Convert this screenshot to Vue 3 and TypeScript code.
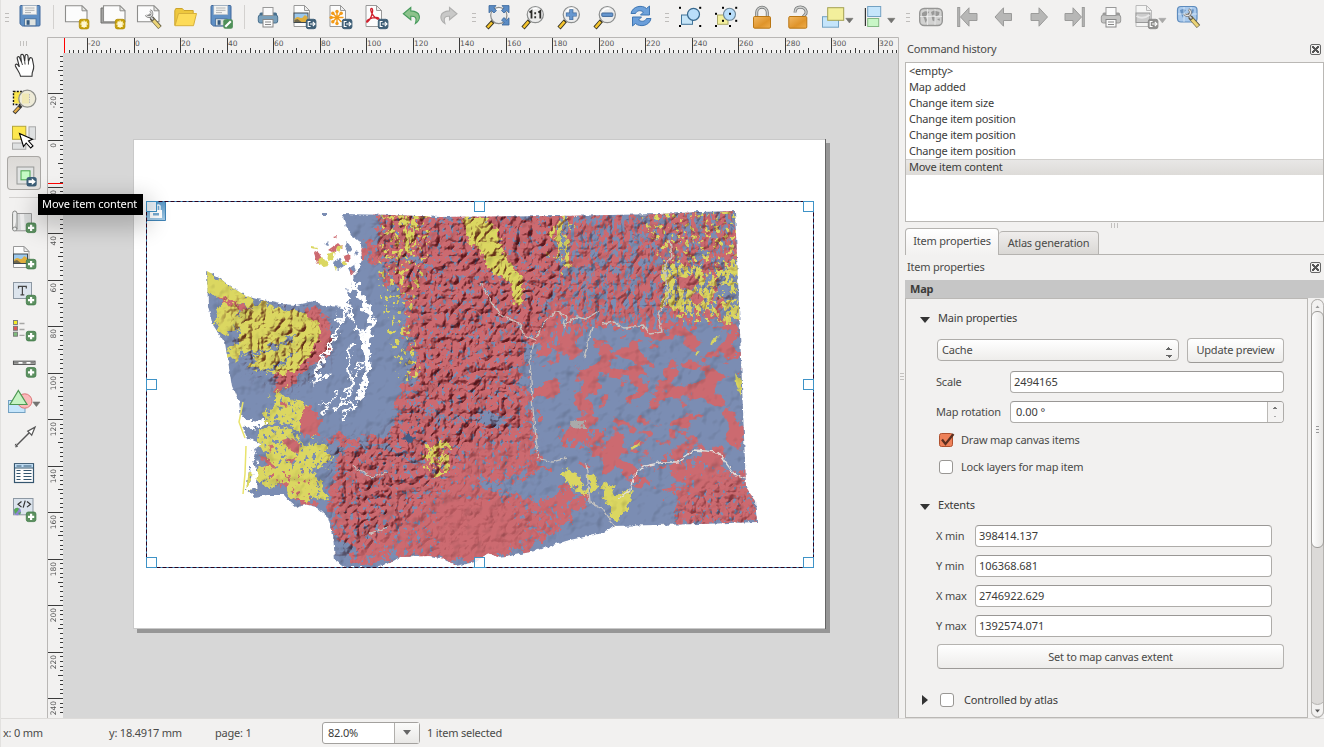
<script setup lang="ts">
import { ref } from 'vue'

interface Tool { icon: string; kind?: 'sep' | 'grip' | 'menu'; active?: boolean }

const badgePlus = (y: number): string =>
  `<rect x="14.3" y="${y + 0.3}" width="9.6" height="9.6" rx="2" fill="#5c9060" stroke="#3f7a46" stroke-width=".8"/><path d="M19.1 ${y + 2}v6.2M16 ${y + 5.1}h6.2" stroke="#fff" stroke-width="2.2"/>`
const badgeExport = (fill: string): string =>
  `<rect x="14.3" y="15.3" width="9.6" height="9.4" rx="2" fill="${fill}" stroke="${fill}"/><path d="M18.6 17.5H16.2v5h2.4M18 20h4.8M20.8 17.8L23 20l-2.200 2.200" fill="none" stroke="#fff" stroke-width="1.100"/>`
const badgeStar =
  '<rect x="14.300" y="15.300" width="9.600" height="9.600" rx="2" fill="#c9a208" stroke="#b08d05" stroke-width=".8"/><path d="M19.100 16.500v7.200M15.500 20.100h7.200M16.600 17.600l5 5M21.600 17.600l-5 5" stroke="#fff8d0" stroke-width="1.500"/>'
const floppy =
  '<path d="M3 1.500h18q1 0 1 1v18.500q0 1-1 1H4.500L2 19.800V2.500q0-1 1-1z" fill="#6090c5" stroke="#40689b"/><rect x="4.800" y="1.500" width="14" height="9.200" fill="#f4f4f2" stroke="#a9b4c0" stroke-width=".6"/><path d="M7 4h9.500M7 6.300h9.500M7 8.600h6" stroke="#a8aaac" stroke-width=".9"/><rect x="6.500" y="14.800" width="11.500" height="7" fill="#dfe3e0" stroke="#416a98" stroke-width=".8"/><rect x="8.600" y="16.200" width="3" height="4.600" fill="#365a80"/>'
const page = (x: number, fill = '#fcfcfc'): string =>
  `<path d="M${x} 1.800h16.500l5 5V17.800h-21.500z" fill="${fill}" stroke="#8d8d8b" stroke-width="1.100"/><path d="M${x + 16.5} 1.800v5h5z" fill="#e4e4e2" stroke="#8d8d8b"/>`
const sheet =
  '<path d="M2 1.500h10.500l5 5V22.500H2z" fill="#fcfcfc" stroke="#999" /><path d="M12.500 1.500v5h5z" fill="#eee" stroke="#999"/>'
const photo =
  '<rect x="2" y="9" width="14" height="9.500" fill="#9cc9ee" stroke="#404a50"/><path d="M2.500 15q2.500-3 5-1.500t4-1 4 .5v5h-13z" fill="#dfae3e"/><path d="M2.500 16l3-1 4 3h-7z" fill="#73684a"/>'
const lens = (cx: number, cy: number): string =>
  `<path d="M${cx - 5.8} ${cy + 6}L2 24" stroke="#373321" stroke-width="4.200"/><path d="M${cx - 6.8} ${cy + 7}L2.500 23.500" stroke="#f6c52d" stroke-width="2.500"/><circle cx="${cx}" cy="${cy}" r="8.100" fill="#ececeb" fill-opacity=".92" stroke="#8b8d8d" stroke-width="1.200"/><path d="M${cx - 5} ${cy - 2}a6 6 0 0 1 7-4" stroke="#fff" stroke-width="1.500" fill="none"/>`
const wrench =
  '<path d="M14 13l8.500 9.500" stroke="#666044" stroke-width="4.600"/><path d="M16 15.500l6 6.700" stroke="#ecd477" stroke-width="3"/><path d="M15.500 14.500l-4.500-5" stroke="#555" stroke-width="3.200"/><path d="M15.500 14.500l-4.500-5" stroke="#d4d4d2" stroke-width="1.700"/><path d="M12.500 5.500a3.200 3.200 0 1 1-4 4.500" fill="none" stroke="#777" stroke-width="2.600"/><path d="M12.500 5.500a3.200 3.200 0 1 1-4 4.500" fill="none" stroke="#e4e4e2" stroke-width="1.200"/>'
const printer = (a: string, b: string): string =>
  `<rect x="3.500" y="8.500" width="17.500" height="6" rx="1.500" fill="${b}"/><rect x="2.300" y="11" width="19.400" height="8" rx="2" fill="${a}" stroke="${b}"/><rect x="7" y="3.500" width="10" height="8" fill="#fafafa" stroke="#999"/><rect x="7" y="15.500" width="10" height="7.500" fill="#fafafa" stroke="#888"/><path d="M9 18h6M9 20.500h6" stroke="#888"/>`
const leftArrow = (x: number): string =>
  `<path d="M${x} 13l8.500-9.200v5.700h8v7h-8v5.700z" fill="#b7b7b6" stroke="#9b9b9a"/>`
const rightArrow = (x: number): string =>
  `<path d="M${x} 13l-8.500-9.200v5.700h-8v7h8v5.700z" fill="#b7b7b6" stroke="#9b9b9a"/>`
const dots = (pts: number[][]): string =>
  pts.map(([x, y]) => `<rect x="${x - 1}" y="${y - 1}" width="2" height="2" fill="#000"/>`).join('')
const caret = (x: number, y: number, c = '#737371'): string =>
  `<path d="M${x - 3.6} ${y - 2}h7.200l-3.600 4.600z" fill="${c}" stroke="${c}" stroke-width=".6"/>`

const icons: Record<string, string> = {
  save: floppy,
  newPage: page(0.5) + badgeStar,
  duplicate: '<path d="M0 4h18v15H0z" fill="#a5a5a3" stroke="#70706e"/>' + page(2.5) + badgeStar,
  manage: page(0.5) + '<g transform="translate(.5 1)">' + wrench + '</g>',
  folder: '<path d="M1.800 21.500V6.500l1-2h6.500l1.700 2h9.200v4" fill="#eec73d" stroke="#cba32c"/><path d="M2 21.700L5.500 9.500h18L20.500 21.700z" fill="#fddb58" stroke="#d8b03a"/>',
  saveAs: floppy + '<rect x="14.300" y="15.300" width="9.600" height="9.400" rx="2" fill="#4f9058"/><path d="M16.300 22.700l5.500-5.500" stroke="#fff" stroke-width="2.200"/>',
  print: printer('#7aa0bb', '#48708e'),
  exportImage: sheet + photo + badgeExport('#3e5e76'),
  exportSvg: sheet + '<g stroke="#f39a17" stroke-width="1.400"><path d="M9 7v13M2.500 13.500h13M4.500 9l9 9M13.500 9l-9 9"/></g><g fill="#f39a17"><circle cx="9" cy="7.500" r="1.700"/><circle cx="9" cy="19.500" r="1.700"/><circle cx="3.200" cy="13.500" r="1.700"/><circle cx="4.800" cy="9.200" r="1.700"/><circle cx="13.200" cy="9.200" r="1.700"/><circle cx="4.800" cy="17.800" r="1.700"/></g>' + badgeExport('#3e5e76'),
  exportPdf: sheet + '<path d="M7.500 4.500c2 0 1 5-.5 8.500s-4 6-4.300 4.800c-.5-1.800 5-4.300 9-4.300s4 2.200 1.500 1.500c-3-1-6-6.500-6.500-9 0-1 .2-1.500.8-1.500z" fill="none" stroke="#cf1f2c" stroke-width="1.300"/>' + badgeExport('#3e5e76'),
  undo: '<path d="M10.800 3.500L3.300 9.800l7.500 6v-3.500c4-.3 6.500 1 4.600 7.200 5.500-3.500 6.500-12-4.600-12.600z" fill="#8cc28b" stroke="#479b5c" stroke-width="1.100"/>',
  redo: '<path d="M13.500 3.500L21 9.800l-7.500 6v-3.500c-4-.3-6.500 1-4.600 7.200-5.500-3.500-6.500-12 4.600-12.600z" fill="#c9c9c8" stroke="#b0b0af" stroke-width="1.100"/>',
  zoomFull: lens(13.8, 11.5) + '<g fill="#5c8cc4" stroke="#376499" stroke-width=".8"><path d="M4 1.600h7L8.900 4l2.600 2.600L9 9 6.400 6.500 4 8.800z"/><path d="M24 1.600h-7L19.100 4l-2.600 2.600L19 9l2.600-2.500L24 8.800z"/><path d="M24 21h-7l2.100-2.400-2.600-2.600 2.500-2.400 2.600 2.500 2.400-2.300z"/></g>',
  zoomOne: lens(14.3, 10.6) + '<path d="M8.500 8.500l2-1.500v7.500M17.300 8.500l2-1.500v7.500" fill="none" stroke="#2c2c2a" stroke-width="1.800"/><path d="M13.300 8.300h1.800v2h-1.800zM13.300 12.200h1.800v2h-1.800z" fill="#2c2c2a"/>',
  zoomIn: lens(14.3, 10.6) + '<path d="M14.300 5.200v10.800M8.900 10.600h10.800" stroke="#40699a" stroke-width="4"/><path d="M14.300 5.800v9.600M9.500 10.600h9.600" stroke="#6797cf" stroke-width="2.600"/>',
  zoomOut: lens(14.3, 10.6) + '<rect x="8.800" y="9" width="11" height="3.400" rx=".6" fill="#6797cf" stroke="#40699a"/>',
  refresh: '<path d="M2 9.500C3.500 2 13 .5 17.500 4.500L20.500 2v9h-9l3-3c-3.500-2.500-7-1-8 1.500z" fill="#6da1da" stroke="#3f76b3"/><path d="M22 14.500c-1.500 7.500-11 9-15.500 5L3.500 22v-9h9l-3 3c3.500 2.500 7 1 8-1.500z" fill="#6a9eda" stroke="#3f76b3"/>',
  group: '<rect x="3.500" y="11" width="11" height="9.300" fill="#c6e5f8" stroke="#41749a"/><circle cx="15.500" cy="10.300" r="6" fill="#b9defa" stroke="#37688e" stroke-width="1.200"/>' + dots([[2, 3.8], [22.2, 3.8], [2, 22], [22.2, 22]]),
  ungroup: '<rect x="3.500" y="11" width="10.500" height="9.300" fill="#f3ef9b" stroke="#aaa868"/><circle cx="15.500" cy="10.300" r="6" fill="#b9defa" stroke="#6d8596" stroke-width="1.100"/>' + dots([[9, 3.8], [22.2, 3.8], [2, 9.8], [16, 9.8], [9, 16.8], [22.2, 16.8], [2, 22], [16, 22]]),
  lock: '<path d="M6.700 13V8.500a5.300 5.300 0 0 1 10.600 0V13" fill="none" stroke="#777a7a" stroke-width="3"/><path d="M6.700 13V8.500a5.300 5.300 0 0 1 10.600 0V13" fill="none" stroke="#cfd0cf" stroke-width="1.300"/><rect x="3.500" y="12.500" width="17" height="11.700" rx="1.200" fill="url(#lockFill)" stroke="#b97614"/>',
  unlock: '<path d="M9 8.500C9 5 11 3 14.500 3c4 .2 6.200 3 5.500 6.500L17 13" fill="none" stroke="#777a7a" stroke-width="3"/><path d="M9 8.500C9 5 11 3 14.500 3c4 .2 6.200 3 5.500 6.500L17 13" fill="none" stroke="#cfd0cf" stroke-width="1.300"/><rect x="2.800" y="12.500" width="18" height="11.700" rx="1.200" fill="url(#lockFill)" stroke="#b97614"/>',
  raise: '<rect x="1.500" y="12.700" width="16" height="10.500" fill="#c5e5fb" stroke="#73a1c2"/><rect x="6.700" y="3.700" width="16" height="12.600" fill="#f3ef9c" stroke="#a3a151"/>' + caret(28.4, 16.3),
  align: '<path d="M3.400 4v18" stroke="#333" stroke-width="1.200"/><rect x="5.700" y="2.500" width="13" height="10" fill="#c5e5fb" stroke="#73a1c2"/><rect x="5.700" y="14.500" width="11" height="8" fill="#c8f6c6" stroke="#83b783"/>' + caret(29.3, 16.3),
  atlas: '<rect x=".7" y="4.500" width="22.600" height="17" rx="4.500" fill="#d2d2d1" stroke="#969695" stroke-width="1.400"/><path d="M3 9l3-1.800 4.500.5-2.500 3-1.500 1.800L8 16l-1.500 3-1.500-5L3 11.500zM12 8l3-1.500 5.500 1.500-.5 3-3 1.500-2-2-2 1zM12.500 12l3.500.5-.5 5-2-1zM18 15l3-.5-.5 2.500z" fill="#999998"/><path d="M1 12.500h22M8.500 5v16M16 5v16" stroke="#f1f1f0" stroke-width=".7"/>',
  first: '<rect x="2.700" y="3.500" width="2" height="19" fill="#b7b7b6" stroke="#9b9b9a"/>' + leftArrow(5.5),
  prev: leftArrow(4),
  next: rightArrow(20.5),
  last: rightArrow(18.5) + '<rect x="19.300" y="3.500" width="2" height="19" fill="#b7b7b6" stroke="#9b9b9a"/>',
  printGray: printer('#c3c3c2', '#9a9a99'),
  exportGray: '<path d="M2 1.500h10.500l5 5V22.500H2z" fill="#f5f5f4" stroke="#bbb"/><path d="M12.500 1.500v5h5z" fill="#eee" stroke="#bbb"/><rect x="2" y="9" width="14" height="9.500" fill="#ccc" stroke="#999"/><path d="M2.500 12q6 4 13-1" fill="none" stroke="#e8e8e8" stroke-width="2"/>' + badgeExport('#8e8e8d') + caret(28.4, 16.3, '#a9a9a8'),
  settings: '<rect x="1.500" y="2.500" width="19.500" height="15.500" rx="3.500" fill="#a9c9ec" stroke="#5d8bbd" stroke-width="1.200"/><path d="M4 6l3-1 3 1-2 3-1 5-2-4zM12 5l6 .5-1 4-3 1z" fill="#6792c1"/><path d="M2 10h19M8 3v15M15 3v15" stroke="#e5f0fb" stroke-width=".7"/>' + wrench,

  hand: '<path d="M8.500 23.200C7.800 19.500 5 16.500 3.400 13c-.6-1.800 1.200-2.500 2.400-1.200l1.600 2L5.200 5.500c-.4-1.900 1.700-2.500 2.400-.8L9.500 9 8.700 3c0-2 2.500-2.200 2.900-.3l1.100 5.800.4-5.600c.2-2 2.600-1.800 2.800 0l.6 5.700 1-2.900c.6-1.700 3-1.200 2.900.7l1.300 6.600c.3 3.500-1.200 5.500-1.500 7l-.2 3.200z" fill="#fff" stroke="#333" stroke-width="1.100"/><path d="M9.500 9l1 3M12.700 8.500l.4 3M16.500 8.600l-.1 3" stroke="#333" stroke-width=".9"/>',
  zoomArea: '<path d="M1.500 2.500h8v12h-8z" fill="#fbe64b"/><path d="M1.500 2.500h12v13h-12z" fill="none" stroke="#111" stroke-width="1.400" stroke-dasharray="2 1.300"/><path d="M9 16.500L2 24" stroke="#333" stroke-width="4"/><path d="M7 18.500l-4.500 4.800" stroke="#e3ab47" stroke-width="2.400"/><circle cx="15.300" cy="9.700" r="8.500" fill="#eeebd8" stroke="#8e8f8a" stroke-width="1.300"/><path d="M10 4.500h7v10h-7z" fill="#f0e8b4"/><path d="M17.500 5v9" stroke="#bbb" stroke-dasharray="1.500 1"/>',
  select: '<rect x=".5" y="1.300" width="13.300" height="13" fill="#fde74f" stroke="#b5a53a"/><rect x="17" y="1.800" width="6.500" height="12.500" fill="#dfe1e2" stroke="#a9a9a9"/><rect x=".5" y="18" width="13.300" height="6.300" fill="#dfe1e2" stroke="#a9a9a9"/><path d="M7.500 8.500l4 13 2.700-3.500 4.500 5 2.300-2-4.500-5 4-1.700z" fill="#fff" stroke="#000" stroke-width="1.100"/>',
  moveContent: '<rect x="5" y="6" width="16.800" height="17" fill="#e1e3e3" stroke="#969896"/><rect x="9" y="9.800" width="9" height="9" fill="#c5fac4" stroke="#46a34c"/><rect x="14.500" y="16" width="10.200" height="9.400" rx="2.500" fill="#3d5f78"/><path d="M16.500 19.300h3.300v-2l4 3.400-4 3.400v-2h-3.300z" fill="#fff"/>',
  addMap: '<path d="M4 4.500h15.500v17.300H4z" fill="#d8dada" stroke="#999"/><path d="M10 5l1 16" stroke="#eee" stroke-width="4"/><path d="M.6 4.500q0-2.500 2.200-2.500t2.200 2.500V20q0 2-2.200 2T.6 20q0-2 2.200-2t2.200 2M.6 4.500V20" fill="#eceded" stroke="#858785"/>' + badgePlus(13.7),
  addImage: '<g transform="translate(-.5 0)">' + sheet + photo + '</g>' + badgePlus(14),
  addLabel: '<rect x="1.500" y="1.500" width="18" height="16" fill="#dce4ed" stroke="#8d98a3"/><path d="M6.500 7.500V5.300h7.800v2.200M10.400 5.500v8.300M8.500 13.800h3.800" fill="none" stroke="#444" stroke-width="1.200"/>' + badgePlus(14),
  addLegend: '<g stroke="#777" stroke-width=".9"><rect x="1.500" y="3.500" width="4" height="4" fill="#f3ec26"/><rect x="1.500" y="9.300" width="4" height="4" fill="#df5555"/><rect x="1.500" y="15.200" width="4" height="4" fill="#7fbd7b"/></g><path d="M7.500 6.500h5M7.500 12.500h5M7.500 18.400h5" stroke="#a6a6a4" stroke-width="1.300"/>' + badgePlus(14),
  addScale: '<rect x="1.500" y="8.200" width="21.500" height="3.200" fill="#fff" stroke="#555" stroke-width="1.100"/><path d="M2 9.800h4.500M10.500 9.800h4M18.500 9.800h4" stroke="#858583" stroke-width="2"/>' + badgePlus(14.3),
  addShape: '<rect x="-3.500" y="11.500" width="16.500" height="12" fill="#c5e5fb" stroke="#73a1c2"/><circle cx="12.700" cy="12" r="7.200" fill="#fab9ba" stroke="#dd7577"/><path d="M6.300 1.500L-2 15.500h17z" fill="#c6f3c3" stroke="#4d9853" stroke-width="1.200"/>' + caret(24.4, 15),
  addArrow: '<path d="M3.500 21.500L18 7" stroke="#555" stroke-width="1.400"/><path d="M23 2.200l-3.300 8-2-2-2-2z" fill="#fff" stroke="#555" stroke-width="1.200"/><path d="M3 20.200l1-1.500M3.500 22l2.300-.7" stroke="#555"/>',
  addTable: '<rect x="2.500" y="2.700" width="19" height="18.800" fill="#fcfcfc" stroke="#35566f" stroke-width="1.200"/><rect x="3" y="3.200" width="18" height="3.500" fill="#bddcf6"/><path d="M2.500 7h19" stroke="#35566f"/><path d="M4.500 5h5M11.500 5h8M4.500 9.500h4M11.500 9.500h8M4.500 12.500h4M11.500 12.500h8M4.500 15.500h4M11.500 15.500h8M4.500 18.500h4M11.500 18.500h8" stroke="#35566f" stroke-width="1.200"/>',
  addHtml: '<rect x="1.500" y="1.500" width="19.500" height="16.300" fill="#dce4ed" stroke="#8d98a3"/><path d="M9.500 4.500L6 7.300l3.500 2.800M15 4.500l3.500 2.800L15 10.100M13.200 3.700l-2 7" fill="none" stroke="#333" stroke-width="1.200"/><circle cx="5.300" cy="14.500" r="3.700" fill="#8c86d2"/><path d="M2 13q3-4 5-1l-2 3-2 2zM6 16l3-1-1 3z" fill="#56ab54"/>' + badgePlus(14.7),
}

const t = (icon: string): Tool => ({ icon })
const menu = (icon: string): Tool => ({ icon, kind: 'menu' })
const sep: Tool = { icon: '', kind: 'sep' }
const grip: Tool = { icon: '', kind: 'grip' }

const topTools: Tool[] = [
  t('save'), sep, t('newPage'), t('duplicate'), t('manage'), t('folder'), t('saveAs'), sep,
  t('print'), t('exportImage'), t('exportSvg'), t('exportPdf'), t('undo'), t('redo'), grip,
  t('zoomFull'), t('zoomOne'), t('zoomIn'), t('zoomOut'), t('refresh'), grip,
  t('group'), t('ungroup'), t('lock'), t('unlock'), menu('raise'), menu('align'), grip,
  t('atlas'), t('first'), t('prev'), t('next'), t('last'), t('printGray'), menu('exportGray'), t('settings'),
]
const sideTools: Tool[] = [
  t('hand'), t('zoomArea'), t('select'), { icon: 'moveContent', active: true }, sep,
  t('addMap'), t('addImage'), t('addLabel'), t('addLegend'), t('addScale'), t('addShape'), t('addArrow'), t('addTable'), t('addHtml'),
]

const history = ['<empty>', 'Map added', 'Change item size', 'Change item position', 'Change item position', 'Change item position', 'Move item content']
const selected = ref(6)

const extents = [
  { label: 'X min', value: '398414.137' },
  { label: 'Y min', value: '106368.681' },
  { label: 'X max', value: '2746922.629' },
  { label: 'Y max', value: '1392574.071' },
]

interface Tick { p: number; len: number; label: string }
const PX = 2.3255
const ticks = (origin: number, from: number, to: number): Tick[] => {
  const out: Tick[] = []
  for (let v = -60; v <= 400; v += 2) {
    const p = Math.floor(origin + v * PX)
    if (p < from || p > to) continue
    const major = v % 20 === 0
    out.push({ p, len: major ? 15 : v % 10 === 0 ? 5 : 3, label: major ? String(v) : '' })
  }
  return out
}
const hTicks = ticks(134.2, 64, 897)
const vTicks = ticks(140.5, 54, 716)

const handles = [[146, 201], [474, 201], [803, 201], [146, 379], [803, 379], [146, 557], [474, 557], [803, 557]]

const land = 'M207 271L218 277 230 286 246 296 262 300 280 304 296 305 314 301 325 306 345 307 352 296 350 284 357 272 362 260 361 242 352 236 346 226 342 214L393 215 440 217 560 216 660 214 700 212 735 211 738 280 742 385 746 487 755 501 757 522 700 524 612 526 603 533 565 541 535 551 510 556 500 558 488 553 475 562 456 566 445 559 430 556 400 557 390 563 375 567 345 567 335 560 333 535 328 517 316 507 304 504 297 508 290 502 284 495 266 495 255 497 246 490 249 470 250 452 262 444 247 438 242 425 239 402 232 386 228 362 225 343 213 325 208 306z'
const mountains = 'M382 215L376 234 363 248 366 256 384 262 379 276 402 290 408 310 403 330 414 350 411 382 396 397 399 414 388 432 372 440 340 436 330 440 346 458 330 480 326 506 335 532 352 548 356 562 400 557 452 563 500 550 512 525 500 495 478 480 484 462 480 440 500 430 535 440 533 400 520 380 522 362 545 336 562 318 570 290 562 250 566 214z'
const north = 'M560 215L735 211 738 258 722 264 716 292 738 312 738 328 702 320 680 334 650 332 620 322 586 326 566 350 535 350 548 312 570 290 560 250z'
const plateau = 'M540 350L600 324 655 330 738 322 745 480 690 500 600 470 560 440 536 400z'
const southeast = 'M672 524L680 480 700 460 746 480 756 503 757 522z'
const southwest = 'M455 425L500 418 536 445 545 470 500 480 540 500 570 485 590 500 540 546 490 556 452 563 430 540 435 490z'
</script>

<template>
  <div class="window">
    <svg width="0" height="0" class="defs">
      <defs>
        <linearGradient id="lockFill" x1="0" x2="1" y1="0" y2="1">
          <stop offset="0" stop-color="#f2b863" /><stop offset=".6" stop-color="#df942a" /><stop offset="1" stop-color="#f0ae4c" />
        </linearGradient>
      </defs>
    </svg>

    <header class="toolbar">
      <span class="edge-grip"></span>
      <template v-for="(tool, i) in topTools" :key="i">
        <span v-if="tool.kind === 'sep'" class="sep"></span>
        <span v-else-if="tool.kind === 'grip'" class="grip"></span>
        <button v-else class="tool" :class="{ menu: tool.kind === 'menu' }">
          <svg width="24" height="24" viewBox="0 0 24 24" v-html="icons[tool.icon]"></svg>
        </button>
      </template>
    </header>

    <main class="body">
      <aside class="side">
        <span class="side-grip"></span>
        <template v-for="(tool, i) in sideTools" :key="i">
          <span v-if="tool.kind === 'sep'" class="side-sep"></span>
          <button v-else class="side-tool" :class="{ active: tool.active }">
            <svg width="24" height="24" viewBox="0 0 24 24" v-html="icons[tool.icon]"></svg>
          </button>
        </template>
        <div class="tooltip">Move item content</div>
      </aside>

      <section class="composer">
        <svg width="852" height="681" viewBox="47 37 852 681">
          <defs>
            <filter id="rag" x="-5%" y="-5%" width="110%" height="110%" color-interpolation-filters="sRGB">
              <feTurbulence type="fractalNoise" baseFrequency=".15" numOctaves="4" seed="4" result="n" />
              <feDisplacementMap in="SourceGraphic" in2="n" scale="14" xChannelSelector="R" yChannelSelector="G" />
            </filter>
            <filter id="coast" x="-5%" y="-5%" width="110%" height="110%" color-interpolation-filters="sRGB">
              <feTurbulence type="fractalNoise" baseFrequency=".2" numOctaves="2" seed="8" result="n" />
              <feDisplacementMap in="SourceGraphic" in2="n" scale="5" xChannelSelector="R" yChannelSelector="G" />
            </filter>
            <filter id="dense" x="-5%" y="-5%" width="110%" height="110%" color-interpolation-filters="sRGB">
              <feTurbulence type="fractalNoise" baseFrequency=".09" numOctaves="4" seed="12" result="n" />
              <feDisplacementMap in="SourceGraphic" in2="n" scale="30" xChannelSelector="R" yChannelSelector="G" result="d" />
              <feTurbulence type="fractalNoise" baseFrequency=".24 .2" numOctaves="4" seed="3" />
              <feComponentTransfer result="m"><feFuncA type="linear" slope="14" intercept="-4.500" /></feComponentTransfer>
              <feComposite in="d" in2="m" operator="in" />
            </filter>
            <filter id="mixed" x="-5%" y="-5%" width="110%" height="110%" color-interpolation-filters="sRGB">
              <feTurbulence type="fractalNoise" baseFrequency=".1" numOctaves="4" seed="22" result="n" />
              <feDisplacementMap in="SourceGraphic" in2="n" scale="26" xChannelSelector="R" yChannelSelector="G" result="d" />
              <feTurbulence type="fractalNoise" baseFrequency=".24 .12" numOctaves="4" seed="31" />
              <feComponentTransfer result="m"><feFuncA type="linear" slope="14" intercept="-5.800" /></feComponentTransfer>
              <feComposite in="d" in2="m" operator="in" />
            </filter>
            <filter id="sparse" x="-5%" y="-5%" width="110%" height="110%" color-interpolation-filters="sRGB">
              <feTurbulence type="fractalNoise" baseFrequency=".09 .1" numOctaves="5" seed="17" result="n" />
              <feDisplacementMap in="SourceGraphic" in2="n" scale="40" xChannelSelector="R" yChannelSelector="G" result="d" />
              <feTurbulence type="fractalNoise" baseFrequency=".04 .05" numOctaves="6" seed="41" />
              <feComponentTransfer result="m"><feFuncA type="linear" slope="24" intercept="-12.600" /></feComponentTransfer>
              <feComposite in="d" in2="m" operator="in" />
            </filter>
            <filter id="flecks" x="-5%" y="-5%" width="110%" height="110%" color-interpolation-filters="sRGB">
              <feTurbulence type="fractalNoise" baseFrequency=".2" numOctaves="4" seed="9" />
              <feComponentTransfer result="m"><feFuncA type="linear" slope="20" intercept="-12" /></feComponentTransfer>
              <feComposite in="SourceGraphic" in2="m" operator="in" />
            </filter>
            <filter id="relief" x="-5%" y="-5%" width="110%" height="110%" color-interpolation-filters="sRGB">
              <feTurbulence type="turbulence" baseFrequency=".075 .07" numOctaves="3" seed="6" />
              <feDiffuseLighting surfaceScale="5" diffuseConstant="1.450" lighting-color="#fff">
                <feDistantLight azimuth="225" elevation="50" />
              </feDiffuseLighting>
              <feComponentTransfer result="l">
                <feFuncR type="linear" slope=".6" intercept=".46" />
                <feFuncG type="linear" slope=".85" intercept=".22" />
                <feFuncB type="linear" slope=".82" intercept=".25" />
              </feComponentTransfer>
              <feGaussianBlur in="SourceAlpha" stdDeviation="7" result="b" />
              <feComposite in="l" in2="b" operator="in" />
            </filter>
            <filter id="softRelief" x="0" y="0" width="100%" height="100%" color-interpolation-filters="sRGB">
              <feTurbulence type="fractalNoise" baseFrequency=".05" numOctaves="3" seed="2" />
              <feDiffuseLighting surfaceScale="1.300" diffuseConstant="1.290" lighting-color="#fff" result="l">
                <feDistantLight azimuth="225" elevation="52" />
              </feDiffuseLighting>
              <feComposite in="l" in2="SourceAlpha" operator="in" />
            </filter>
            <linearGradient id="badge" x2="0" y2="1"><stop offset="0" stop-color="#5996c4" /><stop offset="1" stop-color="#a5cbe6" /></linearGradient>
            <clipPath id="state"><path :d="land" /></clipPath>
            <clipPath id="frame"><rect x="146" y="201" width="668" height="367" /></clipPath>
          </defs>

          <rect x="47" y="37" width="852" height="681" fill="#f2f1f0" />
          <rect x="63" y="53" width="836" height="665" fill="#d7d7d7" />
          <rect x="137" y="143" width="693" height="490" fill="#969696" />
          <rect x="133.500" y="139.500" width="692" height="489" fill="#fff" stroke="#c9c9c9" />
          <path d="M825.500 139v490" stroke="#666" />

          <g clip-path="url(#frame)" class="map">
            <g filter="url(#coast)">
              <path :d="land" fill="#7b8db3" />
              <path d="M322 213h4v3h-4z" fill="#7b8db3" />
            </g>
            <g clip-path="url(#state)">
              <g fill="#cc6a70">
                <path :d="mountains" filter="url(#dense)" />
                <path :d="north" filter="url(#mixed)" />
                <path :d="southwest" filter="url(#dense)" />
                <path :d="plateau" filter="url(#sparse)" />
                <path :d="southeast" filter="url(#dense)" />
                <path d="M560 432l36-6 16 10-12 12-40-2zM655 465l20-8 36 4 30 22-26 4-30-10z" filter="url(#mixed)" />
                <path d="M536 350l40-24 70 10 40 20-20 40-60 10-60-10z" filter="url(#sparse)" />
                <g filter="url(#rag)">
                  <path d="M304 312l10-6 14 14 4 22-4 14-14 8-14 10-16 20-12-2 6-20 18-8 12-20 2-16z" />
                  <path d="M214 284l16 14 16 10 30 6 22 8-2 4-28-8-26-4-20-12z" />
                  <path d="M302 405l10 2 8 12-4 20-12-4-6-18z" /><path d="M262 455l10 2 4 18-10-4zM276 468l30 4 8 12-6 14 10 6-14 2-16-16-22-12z" />
                  <path d="M440 495l60 5 30 35-50 25-45-5z" />
                </g>
              </g>
              <g fill="#7b8db3" filter="url(#rag)">
                <path d="M478 478l30 6 34-4 12 10-22 10-20-6-26-4z" /><path d="M476 410l22 4 12 10-20 4z" />
              </g>
              <g fill="#dbd761">
                <g filter="url(#rag)">
                  <path d="M206 270l22 14 32 20 42 8 12 8-14 4-46-14-34-14-14 2z" />
                  <path d="M214 318l10-18 14 8-4 20-10 8z" />
                  <path d="M230 318l22-10 30 6 36 10 4 12-12 18-16 18-24 2-22-8 10-10-32 2 8-16 10-6z" />
                  <path d="M464 216h22l10 14 10 26 14 20 4 28-8 2-6-22-18-12-14-22-14-18z" />
                  <path d="M562 470l16 4 8 14 2 8-12-8-14-10zM588 474l8 2 2 14-8 2zM606 482l8 2-2 12 6 0 14-6-2 10-12 22-8-8-2-12-8-6z" />
                </g>
                <path filter="url(#dense)" d="M272 400l10-14 6 12 14 4 2 14-8 10 12 14 18 4 6 10-8 12-10 2 10 24-6 12-20-8-16-10-14-6-22 12-10-10 22-12 10-4-6-18-4-22z" />
                <g filter="url(#mixed)">
                  <path d="M664 264h38l10 18 2 30-26 2-22-10z" /><path d="M720 262h18v30l-18-14zM722 302h20v20h-18z" />
                  <path d="M400 216h16v26l-8 14-8-4z" /><path d="M556 222h14l-4 46-12-8z" />
                  <path d="M426 444h22v26h-20z" />
                </g>
                <path filter="url(#flecks)" d="M380 215h50v40l-20 60 12 60-24 10-20-100zM640 212h98v110h-60l-15-50z" />
                <path d="M735 372l6 8v16l-5-12zM712 340l8-5-4 6-6 4zM695 354l6-3-5 6zM634 446l8-4-6 6-5 2z" filter="url(#coast)" />
              </g>
              <g fill="#cc6a70" filter="url(#coast)">
                <path d="M282 440l8-2 4 8-6 4zM292 438l8 6-2 12-8-8zM268 444l6 3-4 5zM280 404l5-3 2 7zM286 460l10-3-4 7z" />
                <path d="M676 276l10 2 8-4 4 10-8 6-10-2zM690 296l8-4 6 8-8 6z" />
              </g>
              <path d="M568 422h10l8-3v7l-14 2z" fill="#aaaaaa" filter="url(#rag)" />
              <g fill="none" stroke="#7b8db3" stroke-width="3" filter="url(#rag)">
                <path d="M376 264l40-6 24 14M382 215l-8 30M478 480l30 6 40-6" /><path d="M404 390l16 20 30 10 60-4" stroke-width="2" />
                <path d="M230 378l44-10 20-14M240 356l26-6 30-14M330 450l50-6 40 20" />
                <path d="M566 216l-6 60-16 40M640 216l-10 50 8 50M600 220l-14 70 20 20M702 216l-4 52" stroke-width="3" />
                <path d="M250 428l38-4 14 16 24 2" stroke-width="4" />
              </g>
            </g>
            <g clip-path="url(#state)" class="shade">
              <path :d="land" fill="#fff" filter="url(#softRelief)" />
            </g>
            <g clip-path="url(#state)" class="shade">
              <path d="M384 205H562L566 290 530 345 520 370 528 440 480 440 440 480 420 500 400 530 340 560 330 440 385 440 410 395 410 310 375 255z" filter="url(#relief)" />
              <path d="M222 300L310 308 332 330 328 360 290 390 262 380 238 352z" filter="url(#relief)" />
              <path d="M563 205L738 205 736 310 620 318 568 320z" filter="url(#relief)" opacity=".55" />
              <path d="M672 524L690 490 736 476 757 503 757 530z" filter="url(#relief)" opacity=".6" />
              <path d="M440 430L530 440 540 470 500 480 560 530 400 575 420 500z" filter="url(#relief)" opacity=".25" />
            </g>
            <g fill="none" stroke="#c6c4c0" stroke-width="1.300" filter="url(#coast)">
              <path d="M480 283l20 32 20 9 2 10 14 6 8-18 12-10 10 4-2 10 12-9 10 2 14-9M602 324l12-2 10 6 20-2 6 8 12-2-4-16 10-20-4-30 8-10-2-16" />
              <path d="M592 326l-8 32M534 342l-4 18 2 40 6 58 14 4 14-4" />
              <path d="M618 498l12-8 4-14 10-10 20-4 14 0 16-12 24 2 16 22 12 4" stroke="#e2dfdb" />
              <path d="M586 462l4 40 14 8 10 16M352 466l20 12 14-6M370 534l20-8" />
            </g>
            <g fill="none" stroke="#fff" filter="url(#rag)" stroke-linecap="round">
              <path d="M350 278l8 14 10 16 4 18-8 14 4 18-2 24-8 16" stroke-width="5.500" />
              <path d="M345 305l-4 20-12 22-12 22-2 14 14-8" stroke-width="3" />
              <path d="M354 282l-8 16 6 20 12 20M345 312l-8 8" stroke-width="3.500" />
              <path d="M352 342l-4 20 4 22-12 22 8-4 8 4-14 12" stroke-width="2.500" />
              <path d="M364 360l-10 14-2 16M336 394l-8 10-4 8M320 404l8 2M334 412l6-8" stroke-width="1.800" />
              <path d="M242 422l14 2M250 452l4 20-2 14" stroke-width="7" /><path d="M254 423l14-1" stroke-width="2.500" />
            </g>
            <g fill="#7b8db3" filter="url(#rag)"><path d="M346 288l10 4 4 14-8 2z" /><path d="M356 318l7 4-1 8-7-2z" /><path d="M354 350l4 2-2 14-4-2z" /></g>
            <g filter="url(#coast)">
              <path d="M332 262l8-4 4 8-6 4zM344 246l4-4 4 8-4 4zM348 268l6-4 2 8-5 2zM324 244l3-2 2 3zM354 254l3-3 1 5z" fill="#7b8db3" />
              <path d="M314 253l4-2 4 8-4 6zM328 250l10-7 4 4-8 6zM344 256l5-2 1 8-4 1zM350 268l5 4-3 4zM332 237l4-1-1 3z" fill="#cc6a70" />
              <path d="M312 246l5 1-1 2-4-1zM317 260l5-3 5 5 2 5-4 1-3-5-3 3zM328 254l7-3-2 9-6 1zM336 248l6-3-3 7zM342 264l4-3 1 5zM334 266l3 1-1 3z" fill="#dbd761" />
            </g>
            <path d="M243 402l-4 20 6 16M246 446l-1 28-2 20" fill="none" stroke="#e9e36c" stroke-width="1.500" />
            <path d="M408 432l3 4 4 1-2 5-4 2-3-4-4-1z" fill="#425c85" filter="url(#coast)" />
          </g>

          <g>
            <rect x="147" y="202" width="19" height="18.500" fill="url(#badge)" /><path d="M165.500 202v18.500H147" fill="none" stroke="#3f83b5" />
            <rect x="150" y="210" width="12" height="8" fill="#fff" /><rect x="153" y="213" width="6" height="2.500" fill="#76aad0" /><path d="M157 210v-4q1-2 3 0v4" fill="none" stroke="#e8f2f9" stroke-width="1.500" />
          </g>
          <rect x="146.500" y="201.500" width="667" height="366" fill="none" stroke="#3d94c6" />
          <rect x="146.500" y="201.500" width="667" height="366" fill="none" stroke="#2c0320" stroke-dasharray="4 2" />
          <rect v-for="([x, y], i) in handles" :key="i" :x="x + 0.5" :y="y + 0.5" width="10" height="10" fill="#fff" fill-opacity=".85" stroke="#3f93c7" />

          <rect x="48" y="38" width="851" height="15" fill="#f2f1f0" />
          <rect x="48" y="53" width="15" height="665" fill="#f2f1f0" />
          <path d="M47.500 718V37.500H898.500V718" fill="none" stroke="#b9b7b5" />
          <g class="ruler">
            <template v-for="k in hTicks" :key="'h' + k.p">
              <rect :x="k.p" :y="53 - k.len" width="1" :height="k.len" fill="#3c3c3c" />
              <text v-if="k.label" :x="k.p + 1" y="46">{{ k.label }}</text>
            </template>
            <template v-for="k in vTicks" :key="'v' + k.p">
              <rect :y="k.p" :x="63 - k.len" height="1" :width="k.len" fill="#3c3c3c" />
              <text v-if="k.label" text-anchor="end" :transform="`translate(56 ${k.p + 3}) rotate(-90)`">{{ k.label }}</text>
            </template>
          </g>
          <path d="M64.500 38v15M48 183.500h15" stroke="#f00" />
        </svg>
      </section>

      <aside class="dock">
        <span class="dock-grip"></span>
        <div class="dock-col">
          <div class="dock-title"><span>Command history</span><i class="close"></i></div>
          <ul class="history">
            <li v-for="(h, i) in history" :key="i" :class="{ sel: i === selected }" @click="selected = i">{{ h }}</li>
          </ul>
          <span class="split-grip"></span>
          <div class="tabs"><div class="tab on">Item properties</div><div class="tab">Atlas generation</div></div>
          <div class="dock-title second"><span>Item properties</span><i class="close"></i></div>
          <div class="map-head">Map</div>
          <div class="props">
            <div class="form">
              <div class="section"><i class="tri"></i><span>Main properties</span></div>
              <div class="row cache">
                <div class="combo"><span>Cache</span><i class="updown"></i></div>
                <button class="btn">Update preview</button>
              </div>
              <div class="row field"><label>Scale</label><div class="input">2494165</div></div>
              <div class="row field"><label>Map rotation</label><div class="input spin"><span>0.00 °</span><i class="spinner"></i></div></div>
              <div class="row check c1">
                <svg class="tick" width="18" height="18" viewBox="0 0 18 18"><rect x="1.500" y="2.500" width="13" height="13" rx="2" fill="#ee8159" stroke="#b0512f" /><path d="M4 8.500l3.500 4.500L15.500 3" fill="none" stroke="#5d3020" stroke-width="2.300" /></svg>
                <span>Draw map canvas items</span>
              </div>
              <div class="row check c2"><i class="box"></i><span>Lock layers for map item</span></div>
              <div class="section ext"><i class="tri"></i><span>Extents</span></div>
              <div v-for="e in extents" :key="e.label" class="row extent"><label>{{ e.label }}</label><div class="input">{{ e.value }}</div></div>
              <button class="btn wide">Set to map canvas extent</button>
              <div class="atlas-row"><i class="tri right"></i><i class="box"></i><span>Controlled by atlas</span></div>
            </div>
            <div class="scroll">
              <svg width="13" height="419" viewBox="0 0 13 419">
                <defs><linearGradient id="thumb"><stop offset="0" stop-color="#fff" /><stop offset="1" stop-color="#e6e5e3" /></linearGradient></defs>
                <rect x=".5" y=".5" width="12" height="418" rx="6" fill="#dcdad8" stroke="#b5b3b0" />
                <path d="M.5 17V6.500a6 6 0 0 1 12 0V17z" fill="#f2f1f0" stroke="#b5b3b0" />
                <path d="M.5 403v9a6 6 0 0 0 12 0v-9q-6 5-12 0z" fill="#f2f1f0" stroke="#b5b3b0" />
                <rect x=".5" y="12.500" width="12" height="236" rx="5.500" fill="url(#thumb)" stroke="#9d9b98" />
                <path d="M4.500 9h4l-2-2.500z" fill="#999" /><path d="M4 410.500h5l-2.500 3z" fill="#555" />
                <path d="M5 127.500h3M5 130.500h3M5 133.500h3" stroke="#999" />
              </svg>
            </div>
          </div>
        </div>
      </aside>
    </main>

    <footer class="status">
      <span class="s-x">x: 0 mm</span><span class="s-y">y: 18.4917 mm</span><span class="s-page">page: 1</span>
      <div class="zoom"><span>82.0%</span><i><b></b></i></div>
      <span>1 item selected</span>
    </footer>
  </div>
</template>

<style>
body { overflow: hidden; background: #f2f1f0; }
</style>

<style scoped>
* { box-sizing: border-box; }
.window { width: 1324px; height: 747px; display: flex; flex-direction: column; background: #f2f1f0; color: #4a4a48; font: 11px/16px "Noto Sans", "Open Sans", sans-serif; border-left: 1px solid #e2e1df; letter-spacing: -.2px; overflow: hidden; }
.defs { position: absolute; }
svg { display: block; overflow: visible; }
button { border: 0; background: none; padding: 0; font: inherit; color: inherit; letter-spacing: inherit; }
.toolbar { height: 37px; flex: none; display: flex; padding-bottom: 5px; }
.tool { width: 36px; height: 32px; padding: 4px 6px; flex: none; }
.tool.menu { width: 41px; padding-left: 5px; }
.tool.menu + .grip { width: 15px; background-position: 8px 0; }
.sep { width: 11px; height: 24px; margin-top: 5px; background: linear-gradient(#d3d1cf, #d3d1cf) 5px 0 / 1px 100% no-repeat; flex: none; }
.edge-grip, .grip { flex: none; height: 9px; margin-top: 13px; background: repeating-linear-gradient(#bfbdbb 0 1px, transparent 1px 4px) no-repeat; background-size: 4px 9px; }
.edge-grip { width: 11px; background-position: 4px 0; }
.grip { width: 13px; background-position: 6px 0; }
.body { display: flex; height: 681px; flex: none; }
.side { width: 46px; flex: none; display: flex; flex-direction: column; position: relative; }
.side-grip { height: 5px; width: 8px; margin: 4px 0 1px 19px; background: repeating-linear-gradient(90deg, #c3c1bf 0 1px, transparent 1px 3px); }
.side-tool { height: 36px; width: 36px; margin-left: 5px; padding: 6px; flex: none; }
.side-tool.active { height: 34px; width: 34px; margin: 1px 0 1px 6px; padding: 5px; border-radius: 4px; box-shadow: inset 0 0 0 1px #a9a7a4; background: linear-gradient(#dbd9d6, #e7e5e3); }
.side-sep { height: 12px; margin: 0 8px; background: linear-gradient(#d3d1cf, #d3d1cf) 0 6px / 100% 1px no-repeat; flex: none; }
.tooltip { position: absolute; z-index: 2; left: 37px; top: 157px; width: 105px; height: 21px; background: #000; color: #fff; line-height: 20px; padding-left: 4px; letter-spacing: -.1px; white-space: nowrap; box-shadow: 2px 8px 22px 5px rgba(0, 0, 0, .2); }
.composer { width: 852px; flex: none; position: relative; }
.map { isolation: isolate; }
.shade { mix-blend-mode: multiply; }
.ruler { font: 7.500px "DejaVu Sans", sans-serif; fill: #555; letter-spacing: 0; }
.dock { flex: 1; display: flex; min-width: 0; }
.dock-grip { width: 6px; flex: none; background: repeating-linear-gradient(#c3c1bf 0 1px, transparent 1px 3px) 1px 336px / 4px 8px no-repeat; }
.dock-col { flex: 1; display: flex; flex-direction: column; min-width: 0; }
.dock-title { height: 25px; display: flex; align-items: center; justify-content: space-between; padding: 0 3px 1px 2px; flex: none; }
.close { width: 11px; height: 11px; border: 1px solid #666; border-radius: 2px; background: linear-gradient(45deg, transparent 42%, #555 42% 58%, transparent 58%) 1px 1px / 7px 7px no-repeat, linear-gradient(-45deg, transparent 42%, #555 42% 58%, transparent 58%) 1px 1px / 7px 7px no-repeat; }
.history { margin: 0; padding: 0; height: 160px; background: #fff; border: 1px solid #bab8b5; list-style: none; color: #3c3c3a; flex: none; }
.history li { height: 16px; line-height: 16px; padding-left: 3px; }
.history .sel { background: linear-gradient(#e9e8e7, #dddbd8); box-shadow: inset 0 1px #d1cfcc; }
.split-grip { height: 6px; flex: none; background: repeating-linear-gradient(90deg, #c3c1bf 0 1px, transparent 1px 3px) 206px 1px / 9px 5px no-repeat; }
.tabs { height: 27px; display: flex; align-items: flex-end; border-bottom: 1px solid #b5b3b0; flex: none; }
.tab { width: 100px; height: 23px; line-height: 21px; text-align: center; border: 1px solid #b5b3b0; border-left: 0; border-bottom: 0; border-radius: 4px 4px 0 0; background: linear-gradient(#efedec, #dad8d5); }
.tab.on { width: 94px; height: 27px; margin-bottom: -1px; line-height: 24px; border-left: 1px solid #b5b3b0; background: linear-gradient(#fff, #f2f1f0); }
.map-head { height: 18px; line-height: 18px; background: #c6c6c6; font-weight: 700; padding-left: 5px; flex: none; color: #3c3c3a; }
.props { height: 420px; display: flex; flex: none; }
.form { width: 403px; border: 1px solid #bab8b5; padding: 10px 23px 0 14px; flex: none; }
.scroll { margin-left: 3px; margin-top: 1px; }
.section { display: flex; align-items: center; height: 18px; color: #3c3c3a; }
.section .tri { margin-top: 3px; }
.tri { width: 0; height: 0; border: 5.500px solid transparent; border-top: 6.500px solid #333; border-bottom: 0; flex: none; }
.section span { margin-left: 8px; }
.row { display: flex; align-items: center; }
.cache { margin: 10px 0 0 17px; height: 26px; gap: 8px; }
.combo { width: 242px; height: 22px; border: 1px solid #aeaca9; border-radius: 4px; background: linear-gradient(#fff, #eeedeb); padding: 0 6px 0 4px; display: flex; align-items: center; justify-content: space-between; }
.updown { width: 6px; height: 14px; margin-top: 3px; background: linear-gradient(to bottom right, transparent 50%, #666 50%) 0 2px / 3px 3px no-repeat, linear-gradient(to bottom left, transparent 50%, #666 50%) 3px 2px / 3px 3px no-repeat, linear-gradient(to top right, transparent 50%, #666 50%) 0 10px / 3px 3px no-repeat, linear-gradient(to top left, transparent 50%, #666 50%) 3px 10px / 3px 3px no-repeat; }
.btn { width: 97px; height: 25px; border: 1px solid #b5b3b0; border-bottom-color: #9c9a97; border-radius: 4px; background: linear-gradient(#fff, #edecea); text-align: center; }
.input { height: 22px; border: 1px solid #aeaca9; border-top-color: #999795; border-radius: 4px; background: #fff; padding-left: 3px; line-height: 20px; color: #3c3c3a; flex: 1; letter-spacing: -.05px; }
.field { height: 22px; margin-left: 16px; }
.field + .field { margin-top: 8px; }
.cache + .field { margin-top: 8px; }
.field label { width: 74px; }
.spin { display: flex; padding-left: 5px; overflow: hidden; }
.spin span { flex: 1; }
.spinner { width: 16px; border-left: 1px solid #bbb9b6; background: linear-gradient(to bottom right, transparent 50%, #777 50%) 5px 5px / 2px 2px no-repeat, linear-gradient(to bottom left, transparent 50%, #777 50%) 7px 5px / 2px 2px no-repeat, linear-gradient(to top right, transparent 50%, #aaa 50%) 5px 14px / 2px 2px no-repeat, linear-gradient(to top left, transparent 50%, #aaa 50%) 7px 14px / 2px 2px no-repeat, #f4f3f2; }
.check { margin-left: 17px; height: 18px; }
.tick { margin: 0 5px 0 1px; }
.c1 { margin-top: 8px; }
.c2 { margin-top: 9px; }
.box { width: 14px; height: 14px; border: 1px solid #999794; border-radius: 3px; background: #fff; flex: none; }
.c2 .box { margin: 0 8px 0 2px; }
.ext { margin-top: 20px; }
.extent { height: 22px; margin: 0 12px 8px 16px; }
.ext + .extent { margin-top: 11px; }
.extent label { width: 39px; }
.wide { width: 347px; display: block; margin: -1px 0 0 17px; }
.atlas-row { display: flex; align-items: center; height: 20px; margin-top: 21px; color: #3c3c3a; padding-left: 2px; letter-spacing: -.12px; }
.tri.right { border: 5.500px solid transparent; border-left: 6.500px solid #333; border-right: 0; }
.atlas-row .box { margin: 0 10px 0 12px; }
.status { height: 29px; flex: none; display: flex; align-items: center; border-top: 1px solid #dddbd9; padding: 0 0 1px 2px; }
.s-x { width: 106px; }
.s-y { width: 106px; }
.s-page { width: 107px; }
.zoom { width: 98px; height: 22px; border: 1px solid #a3a19e; border-radius: 3px; background: #fff; display: flex; margin-right: 7px; color: #3c3c3a; }
.zoom span { flex: 1; padding-left: 5px; line-height: 20px; }
.zoom i { width: 25px; border-left: 1px solid #b1afac; background: linear-gradient(#fbfbfa, #e9e8e6); display: flex; align-items: center; justify-content: center; }
.zoom b { border: 4px solid transparent; border-top: 5px solid #666; border-bottom: 0; }
</style>
